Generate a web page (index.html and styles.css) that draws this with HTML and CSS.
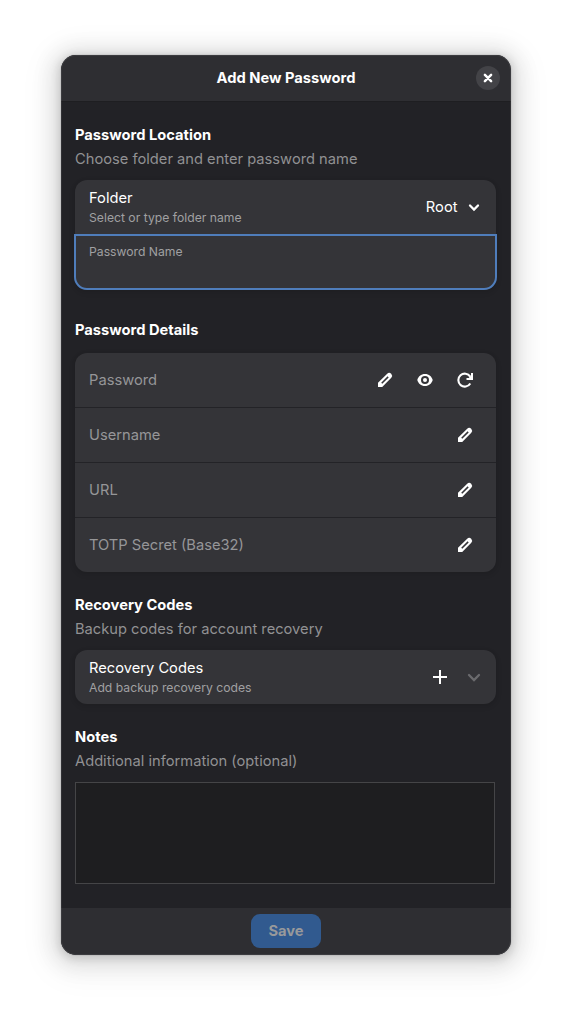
FILE: index.html
```html
<!DOCTYPE html>
<html lang="en">
<head>
<meta charset="utf-8">
<title>Add New Password</title>
<link rel="stylesheet" href="styles.css">
</head>
<body>
<svg class="sprites" aria-hidden="true">
  <symbol id="pencil" viewBox="0 0 16 16"><path fill="currentColor" fill-rule="evenodd" d="M1 15v-4.200L10.200 1.700Q12.200 0 14.200 1.800Q16 3.800 14.300 5.800L5.200 15ZM4.200 10.700 5.300 11.800 11.700 5.400 10.600 4.300Z"/></symbol>
  <symbol id="chevron" viewBox="0 0 16 16"><path fill="none" stroke="currentColor" stroke-width="2.300" stroke-linecap="round" stroke-linejoin="miter" d="M3 6l5 5 5-5"/></symbol>
</svg>
<main class="dialog">
  <header class="titlebar">
    <h1 class="title">Add New Password</h1>
    <button class="close" aria-label="Close"><svg class="icon" viewBox="0 0 16 16"><path fill="none" stroke="currentColor" stroke-width="2.500" stroke-linecap="round" d="M4.900 4.900l6.200 6.200M11.100 4.900l-6.200 6.200"/></svg></button>
  </header>
  <div class="content">
    <section class="group location">
      <h2 class="heading">Password Location</h2>
      <p class="description">Choose folder and enter password name</p>
      <div class="card">
        <div class="row">
          <div class="labels"><span class="name">Folder</span><span class="subtitle">Select or type folder name</span></div>
          <span class="value">Root</span>
          <svg class="icon arrow small" viewBox="0 0 16 16"><path fill="none" stroke="currentColor" stroke-width="2.300" stroke-linecap="round" d="M4 6.500l4 4 4-4"/></svg>
        </div>
        <div class="row focused"><span class="subtitle">Password Name</span></div>
      </div>
    </section>
    <section class="group details">
      <h2 class="heading">Password Details</h2>
      <div class="card">
        <div class="row entry"><span class="placeholder">Password</span>
          <svg class="icon"><use href="#pencil"/></svg>
          <svg class="icon" viewBox="0 0 16 16"><path fill="currentColor" fill-rule="evenodd" d="M8 2C4 2 1.200 4.600.300 8 1.200 11.400 4 14 8 14s6.800-2.600 7.700-6C14.800 4.600 12 2 8 2Zm0 2a4 4 0 1 1 0 8 4 4 0 0 1 0-8Z"/><circle cx="8" cy="8" r="2" fill="currentColor"/></svg>
          <svg class="icon" viewBox="0 0 16 16"><path fill="none" stroke="currentColor" stroke-width="2.100" d="M13.300 11.500A6.450 6.450 0 1 1 13.200 4.600"/><path fill="currentColor" d="M16 1v7H9.500V6h2.200L14 3.500V1Z"/></svg>
        </div>
        <div class="row entry"><span class="placeholder">Username</span><svg class="icon"><use href="#pencil"/></svg></div>
        <div class="row entry"><span class="placeholder">URL</span><svg class="icon"><use href="#pencil"/></svg></div>
        <div class="row entry"><span class="placeholder">TOTP Secret (Base32)</span><svg class="icon"><use href="#pencil"/></svg></div>
      </div>
    </section>
    <section class="group recovery">
      <h2 class="heading">Recovery Codes</h2>
      <p class="description">Backup codes for account recovery</p>
      <div class="card">
        <div class="row">
          <div class="labels"><span class="name">Recovery Codes</span><span class="subtitle">Add backup recovery codes</span></div>
          <svg class="icon plus" viewBox="0 0 16 16"><path fill="currentColor" d="M7 1h2v6h6v2H9v6H7V9H1V7h6z"/></svg>
          <svg class="icon arrow dim"><use href="#chevron"/></svg>
        </div>
      </div>
    </section>
    <section class="group">
      <h2 class="heading">Notes</h2>
      <p class="description">Additional information (optional)</p>
      <textarea class="notes" aria-label="Notes"></textarea>
    </section>
  </div>
  <footer class="actions"><button class="save">Save</button></footer>
</main>
</body>
</html>
```
FILE: styles.css
```css
* { box-sizing: border-box; }
body {
  margin: 0;
  height: 1022px;
  padding: 55px 61px;
  background: #fff;
  font: 14.7px/20px Inter, "Noto Sans", sans-serif;
  color: #fff;
  overflow: hidden;
}
.sprites { display: none; }
h1, h2, p { margin: 0; }
button { border: 0; padding: 0; font: inherit; color: inherit; }
.dialog {
  display: flex;
  flex-direction: column;
  width: 450px;
  height: 900px;
  border-radius: 15px;
  overflow: hidden;
  background: #222226;
  box-shadow: 0 2px 8px 2px rgba(0,0,0,.13), 0 3px 20px 10px rgba(0,0,0,.09), 0 6px 32px 16px rgba(0,0,0,.04), 0 0 0 1px rgba(0,0,0,.05);
  position: relative;
}
.dialog::after {
  content: "";
  position: absolute;
  inset: 0;
  border-radius: inherit;
  box-shadow: inset 0 0 0 1px rgba(255,255,255,.07);
  pointer-events: none;
}
.titlebar {
  display: grid;
  grid-template-columns: 24px 1fr 24px;
  align-items: center;
  height: 47px;
  padding: 0 11px;
  background: #2e2e32;
  border-bottom: 1px solid #1e1e21;
}
.title { grid-column: 2; text-align: center; font-size: 14.7px; font-weight: 700; }
.close {
  display: grid;
  place-items: center;
  width: 24px;
  height: 24px;
  border-radius: 50%;
  background: #434347;
}
.icon { display: block; flex: none; width: 16px; height: 16px; color: #fff; }
.content { flex: 1; padding: 23px 15px 0 14px; }
.heading { font-size: 14.7px; font-weight: 700; }
.description { margin-top: 4px; color: #919193; }
.card {
  margin-top: 11px;
  border-radius: 12px;
  background: #343438;
  box-shadow: 0 1px 3px 1px rgba(0,0,0,.07), 0 2px 6px 2px rgba(0,0,0,.03);
}
.row { display: flex; align-items: center; height: 54px; padding: 0 14px; }
.labels { display: flex; flex-direction: column; flex: 1; padding-top: 2px; }
.subtitle { font-size: 12.2px; line-height: 20px; color: #a0a0a2; }
.arrow { margin-left: 8px; }
.value { margin-right: 0.5px; }
.dim { color: #6b6b6e; }
.focused {
  align-items: flex-start;
  height: 56px;
  margin: 0 -1px;
  padding: 6px 13px;
  border: 2px solid #4f7dbb;
  border-radius: 0 0 13px 13px;
}
.details { margin-top: 30px; }
.details .card { margin-top: 13px; }
.entry { height: 55px; gap: 24px; padding-right: 23px; border-bottom: 1px solid #232327; }
.entry:last-child { height: 54px; border-bottom: 0; }
.placeholder { flex: 1; color: #969698; }
.recovery { margin-top: 23px; }
.plus { margin-right: 10px; }
.recovery + .group { margin-top: 23px; }
.notes {
  display: block;
  width: 420px;
  height: 102px;
  margin-top: 11px;
  border: 1px solid #454547;
  border-radius: 0;
  background: #1e1e20;
  resize: none;
}
.actions { display: flex; justify-content: center; height: 47px; padding-top: 6px; background: #2e2e32; }
.save { width: 70px; height: 34px; border-radius: 9px; background: #315a8f; color: #98999b; font-weight: 700; }
```
